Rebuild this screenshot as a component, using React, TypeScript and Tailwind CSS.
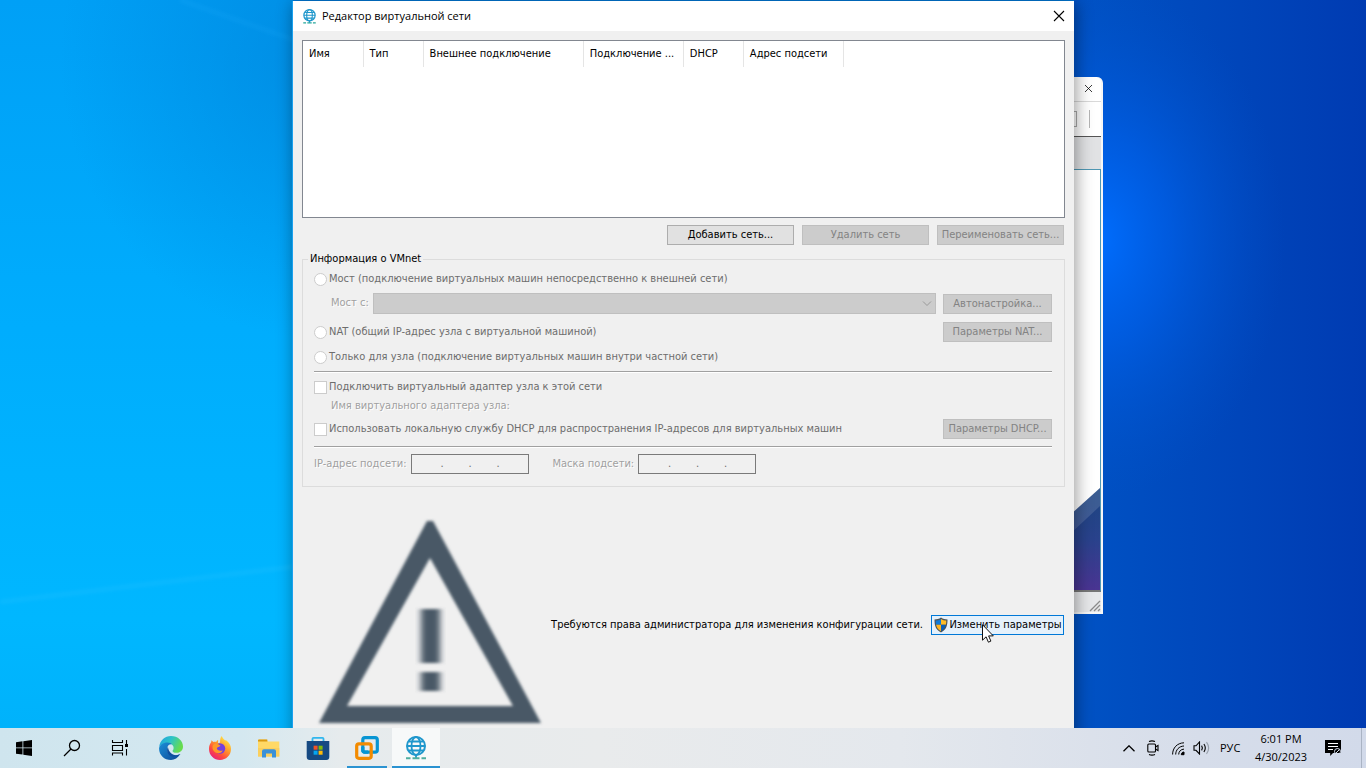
import type { ReactNode } from "react";

const columns = [
  { title: "Имя", width: "w-[60px]" },
  { title: "Тип", width: "w-[60px]" },
  { title: "Внешнее подключение", width: "w-[160px]" },
  { title: "Подключение ...", width: "w-[100px]" },
  { title: "DHCP", width: "w-[60px]" },
  { title: "Адрес подсети", width: "w-[100px]" },
];

function Globe({ className, stand }: { className: string; stand: string }) {
  return (
    <svg viewBox="0 0 20 24" className={className} fill="none" stroke="#1f97cc" aria-hidden="true">
      <circle cx="10" cy="10" r="9" strokeWidth="2" />
      <ellipse cx="10" cy="10" rx="4.500" ry="9" strokeWidth="1.800" />
      <path d="M3 5.500h14M1 10h18M3 14.500h14" strokeWidth="1.800" />
      <path d="M10 19v3" strokeWidth="1.800" />
      <path d="M0 22.300h4.500M6.500 22.300h7M15.500 22.300h4.500" stroke={stand} strokeWidth="2" />
    </svg>
  );
}

function CloseMark({ className }: { className: string }) {
  return (
    <svg viewBox="0 0 10 10" className={className} stroke="#000" strokeWidth="1.1" aria-hidden="true">
      <path d="M0 0l10 10M10 0L0 10" />
    </svg>
  );
}

function PushButton({ children, width, disabled }: { children: ReactNode; width: string; disabled?: boolean }) {
  return (
    <button
      type="button"
      disabled={disabled}
      className={`h-5 shrink-0 border text-center leading-[18px] whitespace-nowrap ${width} ${
        disabled ? "border-[#bfbfbf] bg-[#cccccc] text-[#838383]" : "border-[#adadad] bg-[#e1e1e1] text-black"
      }`}
    >
      {children}
    </button>
  );
}

function Choice({ type, children }: { type: "radio" | "checkbox"; children: ReactNode }) {
  return (
    <label className="flex h-5 items-center gap-[2px] whitespace-nowrap text-[#6d6d6d]">
      <input
        type={type}
        name={type === "radio" ? "mode" : undefined}
        disabled
        className={`size-[13px] shrink-0 appearance-none border border-[#cccccc] bg-white ${type === "radio" ? "rounded-full" : ""}`}
      />
      {children}
    </label>
  );
}

function Separator() {
  return <hr className="h-[2px] border-t border-b border-t-[#a0a0a0] border-b-white" />;
}

function AddressBox({ label }: { label: string }) {
  return (
    <div className="flex items-center gap-1">
      <span className="text-[#a0a0a0] [text-shadow:1px_1px_0_#fff]">{label}</span>
      <div role="group" aria-label={label} className="flex h-5 w-[118px] items-center border border-[#7a7a7a] pl-1 text-[#6d6d6d]">
        {[0, 1, 2, 3].map((i) => (
          <div key={i} className="flex items-center">
            <input disabled aria-label={`${label} ${i + 1}`} className="h-4 w-[25px] bg-transparent text-center" />
            {i < 3 && <span className="flex w-[3px] justify-center">.</span>}
          </div>
        ))}
      </div>
    </div>
  );
}

function Warning() {
  return (
    <svg viewBox="0 0 240 216" className="h-[216px] w-60 shrink-0" fill="#485966" aria-hidden="true">
      <defs>
        <filter id="soft" x="-5%" y="-5%" width="110%" height="110%">
          <feGaussianBlur stdDeviation="1.5" />
        </filter>
        <filter id="softer" x="-30%" y="-10%" width="160%" height="120%">
          <feGaussianBlur stdDeviation="3 1.5" />
        </filter>
      </defs>
      <path filter="url(#soft)" fillRule="evenodd" d="M117 4h6L231 206H9zM120 41L37 189h166z" />
      <path filter="url(#softer)" d="M111 92h19v54h-19zM111 155h19v19h-19z" />
    </svg>
  );
}

function Shield() {
  return (
    <svg viewBox="0 0 16 16" className="size-4 shrink-0" aria-hidden="true">
      <path d="M8 .6C6 2 3.800 2.500 1.500 2.500c0 6 1 10 6.500 13 5.500-3 6.500-7 6.500-13C12.200 2.500 10 2 8 .6z" fill="#4c5358" />
      <path d="M8 2C6.300 3.100 4.600 3.500 2.700 3.600c0 1.600.1 3 .4 4.200H8z" fill="#0f7ad8" />
      <path d="M8 2c1.700 1.100 3.400 1.500 5.300 1.600 0 1.600-.1 3-.4 4.200H8z" fill="#ffbd25" />
      <path d="M3.100 7.800c.6 2.800 2 4.800 4.900 6.500V7.800z" fill="#ffb41f" />
      <path d="M12.900 7.800c-.6 2.800-2 4.800-4.900 6.500V7.800z" fill="#0a60b8" />
    </svg>
  );
}

function Cursor() {
  return (
    <svg viewBox="0 0 12 19" className="pointer-events-none absolute top-[9px] left-[51px] z-10 h-[19px] w-3" aria-hidden="true">
      <path d="M.5.700v15.500l3.600-3.400 2.300 5.400 2.500-1.100-2.300-5.200h4.700z" fill="#fff" stroke="#111" strokeWidth="1" />
    </svg>
  );
}

function BackWindow() {
  return (
    <section aria-label="VMware Workstation" className="absolute top-[77px] right-[-29px] flex h-[537px] w-[600px] flex-col overflow-hidden rounded-t-md border-r-2 border-b-2 border-[#f7f7f7] bg-white">
      <div className="flex h-[25px] items-center justify-end border-b border-[#d9d9d9] pr-[9px] pb-px">
        <button type="button" aria-label="Закрыть VMware">
          <CloseMark className="size-[7px] overflow-visible" />
        </button>
      </div>
      <div className="flex h-[35px] items-center justify-end border-b border-[#555] pr-[11px]">
        <span className="mr-3 h-4 w-5 border border-[#aaa]" />
        <span className="h-[18px] w-px bg-[#b5b5b5]" />
      </div>
      <div className="h-8 bg-[#e1e2e4]" />
      <div className="flex flex-1 flex-col justify-end border-t border-r border-b-2 border-[#4f97b3] border-b-[#777]">
        <svg viewBox="0 0 60 104" className="h-[104px] w-[60px] self-end" aria-hidden="true">
          <defs>
            <linearGradient id="base" x1="0" y1="0" x2="0" y2="1">
              <stop offset="0" stopColor="#1c4580" />
              <stop offset=".5" stopColor="#29428c" />
              <stop offset="1" stopColor="#4a3492" />
            </linearGradient>
          </defs>
          <path d="M0 56L60 2v102H0z" fill="url(#base)" />
          <path d="M0 56L60 2v18L0 76z" fill="#fff" opacity=".13" />
        </svg>
      </div>
      <div className="flex h-5 items-end justify-end bg-[#e7e8ea]">
        <svg viewBox="0 0 12 12" className="size-3" stroke="#8b8b8b" strokeWidth="1.300" aria-hidden="true">
          <path d="M1 11L11 1M5 11l6-6M9 11l2-2" />
        </svg>
      </div>
    </section>
  );
}

function Dialog() {
  return (
    <section
      aria-label="Редактор виртуальной сети"
      className="relative flex h-[760px] flex-col border-l border-[#1ba1ee] bg-[#f0f0f0] shadow-[2px_2px_16px_rgba(0,0,0,0.4)]"
    >
      <header className="flex h-[30px] items-center gap-[6px] bg-white px-[10px] font-['Open_Sans',sans-serif] text-[11px] text-black">
        <Globe className="h-[15px] w-[13px]" stand="#27a79c" />
        <h1 className="flex-1">Редактор виртуальной сети</h1>
        <button type="button" aria-label="Закрыть">
          <CloseMark className="size-[10px] overflow-visible" />
        </button>
      </header>

      <div className="px-[9px] pt-[9px]">
        <div className="h-[178px] border border-[#828790] bg-white">
          <table className="w-[541px] table-fixed border-collapse">
            <thead>
              <tr className="h-[26px]">
                {columns.map((c) => (
                  <th key={c.title} scope="col" className={`border-r border-[#e5e5e5] px-[6px] pt-px text-left font-normal whitespace-nowrap ${c.width}`}>
                    {c.title}
                  </th>
                ))}
              </tr>
            </thead>
          </table>
        </div>

        <div className="mt-[7px] flex justify-end gap-2 pr-px">
          <PushButton width="w-[127px]">Добавить сеть...</PushButton>
          <PushButton width="w-[127px]" disabled>Удалить сеть</PushButton>
          <PushButton width="w-[127px]" disabled>Переименовать сеть...</PushButton>
        </div>

        <fieldset className="mt-[7px] border border-[#dcdcdc] pr-3 pb-3 pl-[11px]">
          <legend className="-ml-[6px] px-[2px] leading-[14px]">Информация о VMnet</legend>
          <div className="flex flex-col pt-[3px]">
            <Choice type="radio">Мост (подключение виртуальных машин непосредственно к внешней сети)</Choice>
            <div className="mt-1 flex h-[21px] items-center pl-[17px]">
              <label htmlFor="bridge" className="mr-1 text-[#a0a0a0] [text-shadow:1px_1px_0_#fff]">Мост с:</label>
              <div className="relative mr-[7px] flex-1">
                <select id="bridge" disabled className="block h-[21px] w-full appearance-none border border-[#bfbfbf] bg-[#cccccc]" />
                <svg viewBox="0 0 8 5" className="absolute top-2 right-[5px] h-[5px] w-2 overflow-visible" fill="none" stroke="#9a9a9a" aria-hidden="true">
                  <path d="M0 .5l4 4 4-4" />
                </svg>
              </div>
              <PushButton width="w-[109px]" disabled>Автонастройка...</PushButton>
            </div>
            <div className="mt-2 flex justify-between">
              <Choice type="radio">NAT (общий IP-адрес узла с виртуальной машиной)</Choice>
              <PushButton width="w-[109px]" disabled>Параметры NAT...</PushButton>
            </div>
            <div className="mt-[5px] mb-1">
              <Choice type="radio">Только для узла (подключение виртуальных машин внутри частной сети)</Choice>
            </div>
            <Separator />
            <div className="mt-1">
              <Choice type="checkbox">Подключить виртуальный адаптер узла к этой сети</Choice>
            </div>
            <p className="mt-[2px] pl-[17px] leading-[14px] text-[#a0a0a0] [text-shadow:1px_1px_0_#fff]">Имя виртуального адаптера узла:</p>
            <div className="mt-[6px] mb-[7px] flex justify-between">
              <Choice type="checkbox">Использовать локальную службу DHCP для распространения IP-адресов для виртуальных машин</Choice>
              <PushButton width="w-[109px]" disabled>Параметры DHCP...</PushButton>
            </div>
            <Separator />
            <div className="mt-[6px] flex gap-6">
              <AddressBox label="IP-адрес подсети:" />
              <AddressBox label="Маска подсети:" />
            </div>
          </div>
        </fieldset>

        <div className="mt-[30px] flex items-center pr-px pl-2">
          <Warning />
          <p className="mr-2 ml-auto whitespace-nowrap">Требуются права администратора для изменения конфигурации сети.</p>
          <div className="relative">
            <button type="button" className="flex h-5 w-[133px] items-center justify-center border border-[#0078d7] bg-[#e5f1fb] whitespace-nowrap text-black">
              <Shield />
              Изменить параметры
            </button>
            <Cursor />
          </div>
        </div>
      </div>
    </section>
  );
}

function EdgeIcon() {
  return (
    <svg viewBox="0 0 24 24" className="size-6" aria-hidden="true">
      <defs>
        <linearGradient id="edgeTop" x1="0" y1="0" x2="1" y2=".4">
          <stop offset="0" stopColor="#1f9de0" />
          <stop offset=".5" stopColor="#2cc3c8" />
          <stop offset="1" stopColor="#67dc4e" />
        </linearGradient>
        <linearGradient id="edgeLow" x1="0" y1="0" x2="1" y2="1">
          <stop offset="0" stopColor="#1b8fd8" />
          <stop offset="1" stopColor="#0d4795" />
        </linearGradient>
      </defs>
      <path d="M.2 11C.8 4.500 6 0 12 0c7 0 12 5 12 10.500 0 4-3 6.300-6.500 6.300-3 0-4-1.200-4-1.900 0-.6 1.100-1.200 1.100-3 0-2.400-2-4.700-6-4.700C4.700 7.200 1.400 9 .2 11z" fill="url(#edgeTop)" />
      <path d="M.1 12c.4-3 3.900-5.600 8.300-5.600 2.200 0 4 .7 5 2-3-.7-5.400 1.500-5.400 4.700 0 5.400 6 9 13.300 5C19 22 15.500 24 12 24 5 24-.3 18.600.1 12z" fill="url(#edgeLow)" />
      <path d="M8.900 10.800c-2 4-.5 9 5.100 9.900 3 .4 5.600-.8 7.500-2.600-6.500 3-11.800-.8-12.600-7.300z" fill="#0f4f9e" />
    </svg>
  );
}

function FirefoxIcon() {
  return (
    <svg viewBox="0 0 24 24" className="size-6" aria-hidden="true">
      <defs>
        <linearGradient id="fox" x1=".85" y1=".05" x2=".2" y2="1">
          <stop offset="0" stopColor="#fff04a" />
          <stop offset=".4" stopColor="#ff9a2b" />
          <stop offset=".7" stopColor="#ff4a3f" />
          <stop offset="1" stopColor="#e21b82" />
        </linearGradient>
      </defs>
      <path d="M13.500 0c1 1.500 1.800 2.800 3.500 4.200 1-.1 1.600.2 2 .8 2.800 2 4 5 4 8.100C23 19.500 18 24 12 24S1 19.300 1 13c0-3 .9-5 2.300-6.900V4.300l2.100 1.800c.9-.3 1.900-.3 2.800-.1.300-1 1.100-1.600 1.900-1.900v3c1 0 1.600-.3 2-.9C12 4.200 12.300 2 13.500 0z" fill="url(#fox)" />
      <circle cx="12" cy="12.500" r="5.200" fill="#7540dc" />
      <path d="M5 9c2-2 5-1.600 7.600.7-1.400 1.500-3.300 1-3.800 2.600.1 2.300 3.800 3.300 6 1.900-1 3.600-6.300 4-9 .8C4.400 13.400 4.100 11 5 9z" fill="#ff9828" />
    </svg>
  );
}

function ExplorerIcon() {
  return (
    <svg viewBox="0 0 22 19" className="h-[19px] w-[22px]" aria-hidden="true">
      <path d="M0 1.500Q0 .6 1 .6h7.500l1.500 2h11.300v14.900H0z" fill="#ffd966" />
      <path d="M0 1.500Q0 .6 1 .6h8.300v2H0z" fill="#d99a12" />
      <path d="M0 9h21.300v8.500H0z" fill="#fbcf5c" />
      <path d="M4 18.600v-6.400q0-2 2-2h10q2 0 2 2v6.400h-4v-4.200H8v4.200z" fill="#3a91d8" />
    </svg>
  );
}

function StoreIcon() {
  return (
    <svg viewBox="0 0 24 24" className="size-6" aria-hidden="true">
      <path d="M6.500 6V2.800q0-1 1-1h9q1 0 1 1V6" fill="none" stroke="#31b7ee" strokeWidth="1.800" />
      <path d="M.7 5h22.600v16q0 3-3 3H3.700q-3 0-3-3z" fill="#164a83" />
      <path d="M7.600 9.700h4v4h-4z" fill="#f35325" />
      <path d="M12.600 9.700h4v4h-4z" fill="#81bc06" />
      <path d="M7.600 14.700h4v4h-4z" fill="#05a6f0" />
      <path d="M12.600 14.700h4v4h-4z" fill="#ffba08" />
    </svg>
  );
}

function VmwareIcon() {
  return (
    <svg viewBox="0 0 24 24" className="size-6" fill="none" strokeWidth="3.200" aria-hidden="true">
      <rect x="7.800" y="1.700" width="14.500" height="14.500" rx="2.200" stroke="#0795d3" />
      <rect x="1.700" y="7.800" width="14.500" height="14.500" rx="2.200" stroke="#f38b00" />
      <path d="M7.800 11v3q0 2.200 2.200 2.200h3" stroke="#0795d3" />
    </svg>
  );
}

function TaskButton({ label, children, state = "" }: { label: string; children: ReactNode; state?: string }) {
  return (
    <button type="button" aria-label={label} className={`flex h-10 w-12 shrink-0 items-center justify-center ${state}`}>
      {children}
    </button>
  );
}

function Taskbar() {
  return (
    <footer className="relative z-10 flex h-10 shrink-0 items-center bg-[linear-gradient(90deg,#cfe5ee_0,#d4e8f0_240px,#e6ebed_340px,#e9ebec_600px,#e4e8ed_900px,#d6ddea_1200px,#d2daea_100%)] font-['Open_Sans',sans-serif] text-[11px] text-black">
      <TaskButton label="Пуск">
        <svg viewBox="0 0 16 16" className="size-4" aria-hidden="true">
          <path d="M0 2.200L6.500 1.300v6.200H0zM7.300 1.200L16 0v7.500H7.300zM0 8.300h6.500v6.200L0 13.700zM7.300 8.300H16V16l-8.700-1.300z" />
        </svg>
      </TaskButton>
      <TaskButton label="Поиск">
        <svg viewBox="0 0 16 16" className="size-4 overflow-visible" fill="none" stroke="#000" strokeWidth="1.300" aria-hidden="true">
          <circle cx="10.500" cy="5.500" r="5" />
          <path d="M7 9L0 16" />
        </svg>
      </TaskButton>
      <TaskButton label="Представление задач">
        <svg viewBox="0 0 16 16" className="size-4 overflow-visible" fill="none" stroke="#000" strokeWidth="1.100" aria-hidden="true">
          <path d="M.5 0v2.500h10V0M.5 5.500h10v5H.5zM.5 15.500v-2.500h10v2.500M14.500 0v4M14.500 9v6.500" />
          <path d="M13 4h3v3h-3z" fill="#000" stroke="none" />
        </svg>
      </TaskButton>
      <div className="flex gap-px pl-[3px]">
        <TaskButton label="Microsoft Edge"><EdgeIcon /></TaskButton>
        <TaskButton label="Firefox"><FirefoxIcon /></TaskButton>
        <TaskButton label="Проводник"><ExplorerIcon /></TaskButton>
        <TaskButton label="Microsoft Store"><StoreIcon /></TaskButton>
      </div>
      <div className="flex gap-[5px] pl-[5px]">
        <button type="button" aria-label="VMware Workstation" className="flex h-10 w-10 items-center justify-center shadow-[inset_0_-2px_0_#2b93d1]">
          <VmwareIcon />
        </button>
        <TaskButton label="Редактор виртуальной сети" state="bg-[#f7f9f9] shadow-[inset_0_-2px_0_#2b93d1]">
          <Globe className="h-6 w-5" stand="#4fae9f" />
        </TaskButton>
      </div>

      <div className="ml-auto flex h-full items-center">
        <svg viewBox="0 0 12 7" className="mr-3 h-[7px] w-3" fill="none" stroke="#000" strokeWidth="1.300" aria-hidden="true">
          <path d="M.5 6.300L6 .8l5.500 5.500" />
        </svg>
        <svg viewBox="0 0 12 16" className="mr-[13px] h-4 w-3" fill="none" stroke="#000" strokeWidth="1.100" aria-hidden="true">
          <path d="M2 1.500Q5 .2 8 1.500M2 14.500q3 1.300 6 0" />
          <rect x=".8" y="4" width="7.700" height="8" rx="1" />
          <path d="M8.500 7l2.500-1.600v5.200L8.500 9" />
        </svg>
        <svg viewBox="0 0 13 13" className="mr-2 size-[13px] overflow-visible" fill="none" stroke="#000" aria-hidden="true">
          <path d="M.6 12.500C.6 6 5 1 12 .8M3.700 12.500C3.700 8 7 4.200 12 4M6.700 12.500c0-3 2-5.200 5.300-5.400" />
          <path d="M9.300 12.700c0-1.700 1-2.600 2.700-2.700v2.700z" fill="#000" />
        </svg>
        <svg viewBox="0 0 17 14" className="mr-[10px] h-[14px] w-[17px]" fill="none" stroke="#000" strokeWidth="1.100" aria-hidden="true">
          <path d="M1 4.800h2L6.500 1v12L3 9.300H1z" />
          <path d="M8.600 4.600q1.600 2.400 0 4.800M10.900 3q2.800 4 0 8" />
          <path d="M13.500 1.200q4.300 5.800 0 11.600" stroke="#98a0ab" />
        </svg>
        <span className="w-[34px]">РУС</span>
        <time className="w-[54px] text-center leading-[18px] whitespace-nowrap">
          6:01 PM
          <br />
          4/30/2023
        </time>
        <svg viewBox="0 0 17 16" className="mr-[19px] ml-[17px] h-4 w-[17px]" aria-hidden="true">
          <path d="M0 0h16v13H8l-2.800 3v-3H0z" />
          <path d="M3 3.500h10M3 6.500h10M3 9.500h5" stroke="#fff" strokeWidth="1.100" />
          <circle cx="12.500" cy="11.500" r="3" fill="none" stroke="#d3dbea" strokeWidth="1" />
          <path d="M10.500 13.500l4-4" stroke="#d3dbea" strokeWidth="1" />
        </svg>
        <span className="mr-1 h-full w-px bg-[#aab4c4]" />
      </div>
    </footer>
  );
}

function Wallpaper() {
  return (
    <svg viewBox="0 0 1366 728" preserveAspectRatio="none" className="absolute inset-0 size-full" aria-hidden="true">
      <defs>
        <linearGradient id="sky" x1="0" y1="0" x2="0" y2="1">
          <stop offset="0" stopColor="#00a0f6" />
          <stop offset=".45" stopColor="#00adfd" />
          <stop offset=".85" stopColor="#00b7ff" />
          <stop offset="1" stopColor="#00b2fb" />
        </linearGradient>
        <radialGradient id="shade">
          <stop offset="0" stopColor="#0078d0" stopOpacity=".5" />
          <stop offset="1" stopColor="#0078d0" stopOpacity="0" />
        </radialGradient>
        <linearGradient id="dusk" x1="0" y1="0" x2="1" y2="0">
          <stop offset="0" stopColor="#0078d7" />
          <stop offset=".58" stopColor="#0052c4" />
          <stop offset="1" stopColor="#003bb2" />
        </linearGradient>
        <radialGradient id="lamp">
          <stop offset="0" stopColor="#006eff" />
          <stop offset=".4" stopColor="#0062ee" stopOpacity=".65" />
          <stop offset="1" stopColor="#0052cc" stopOpacity="0" />
        </radialGradient>
        <filter id="haze" x="-20%" y="-60%" width="140%" height="220%">
          <feGaussianBlur stdDeviation="2" />
        </filter>
      </defs>
      <path d="M0 0h683v728H0z" fill="url(#sky)" />
      <ellipse cx="320" cy="60" rx="260" ry="280" fill="url(#shade)" />
      <path d="M180 0L300 42" stroke="#2bb2ff" strokeWidth="2" opacity=".35" filter="url(#haze)" />
      <path d="M0 602L300 566" stroke="#4cccff" strokeWidth="2" opacity=".35" filter="url(#haze)" />
      <path d="M683 0h683v728H683z" fill="url(#dusk)" />
      <ellipse cx="1095" cy="240" rx="190" ry="260" fill="url(#lamp)" />
      <path d="M293 0h781v2H293z" fill="#0078d7" />
    </svg>
  );
}

export default function App() {
  return (
    <div className="flex h-screen flex-col overflow-hidden font-['DejaVu_Sans_Condensed','DejaVu_Sans',sans-serif] text-[11px] text-black">
      <main className="relative flex min-h-0 flex-1 justify-center overflow-hidden bg-[#0078d7]">
        <Wallpaper />
        <div className="relative h-full w-[782px] pt-px">
          <BackWindow />
          <Dialog />
        </div>
      </main>
      <Taskbar />
    </div>
  );
}
